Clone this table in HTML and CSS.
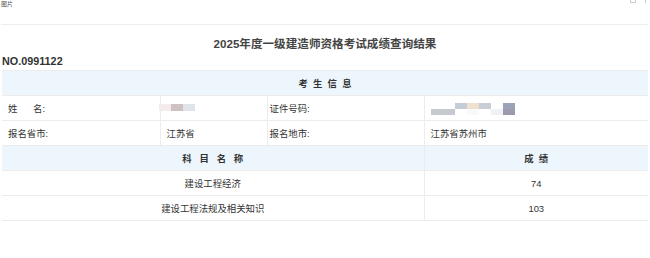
FILE: index.html
```html
<!DOCTYPE html>
<html lang="zh-CN">
<head>
<meta charset="utf-8">
<title>成绩查询结果</title>
<link rel="stylesheet" href="styles.css">
</head>
<body>
<div class="topbar">
  <span class="tab-label">图片</span>
  <span class="win-icons"><span class="win-box"></span><span class="win-slash"></span></span>
</div>
<h1 class="title">2025年度一级建造师资格考试成绩查询结果</h1>
<div class="serial">NO.0991122</div>
<table class="result">
  <colgroup>
    <col class="c1"><col class="c2"><col class="c3"><col class="c4">
  </colgroup>
  <tr class="head">
    <td colspan="4">考&nbsp;&nbsp;生&nbsp;&nbsp;信&nbsp;&nbsp;息</td>
  </tr>
  <tr>
    <td class="label">姓&nbsp;&nbsp;&nbsp;&nbsp;&nbsp;&nbsp;名:</td>
    <td class="value"><span class="mosaic name-mosaic"><i class="m1"></i><i class="m2"></i><i class="m3"></i></span></td>
    <td class="label">证件号码:</td>
    <td class="value"><span class="mosaic id-mosaic">
      <span class="mrow"><i class="w0"></i><i class="g1"></i><i class="g2"></i><i class="g3"></i><i class="w0"></i><i class="g4"></i></span>
      <span class="mrow"><i class="g5"></i><i class="w1"></i><i class="w2"></i><i class="w3"></i><i class="w4"></i><i class="g6"></i></span>
    </span></td>
  </tr>
  <tr>
    <td class="label">报名省市:</td>
    <td class="value">江苏省</td>
    <td class="label">报名地市:</td>
    <td class="value">江苏省苏州市</td>
  </tr>
  <tr class="head">
    <td colspan="3">科&nbsp;&nbsp;&nbsp;目&nbsp;&nbsp;&nbsp;名&nbsp;&nbsp;&nbsp;称</td>
    <td>成&nbsp;&nbsp;绩</td>
  </tr>
  <tr class="score">
    <td colspan="3">建设工程经济</td>
    <td>74</td>
  </tr>
  <tr class="score">
    <td colspan="3">建设工程法规及相关知识</td>
    <td>103</td>
  </tr>
</table>
</body>
</html>
```

FILE: styles.css
```css
html, body {
  margin: 0;
  padding: 0;
  background: #fff;
}
body {
  font-family: "Liberation Sans", "Noto Sans CJK SC", sans-serif;
  color: #333;
  width: 650px;
  height: 258px;
  overflow: hidden;
}
.topbar {
  position: relative;
  height: 24px;
  margin: 0 2px 0 1px;
  border-bottom: 1px solid #eeeeee;
}
.tab-label {
  display: block;
  font-size: 6px;
  line-height: 8px;
  color: #555;
  padding-left: 0;
}
.win-icons {
  position: absolute;
  right: 2px;
  top: 0;
  display: flex;
  gap: 9px;
}
.win-box {
  width: 4px;
  height: 2px;
  border: 1px solid #ccc;
  border-top: none;
}
.win-slash {
  width: 1px;
  height: 3px;
  background: #ccc;
}
.title {
  margin: 0;
  padding-top: 11px;
  height: 16px;
  line-height: 16px;
  font-size: 11.6px;
  font-weight: bold;
  text-align: center;
  color: #444;
}
.serial {
  margin-top: 2px;
  height: 15px;
  line-height: 15px;
  padding-left: 2px;
  font-size: 10.8px;
  font-weight: bold;
  color: #333;
}
.result {
  margin-top: 1px;
  margin-left: 2px;
  width: 646px;
  border-collapse: collapse;
  table-layout: fixed;
  font-size: 9.4px;
  color: #333;
}
.c1 { width: 158px; }
.c2 { width: 107px; }
.c3 { width: 157px; }
.c4 { width: 224px; }
.result td {
  height: 24px;
  padding: 0 6px;
  border-top: 1px solid #ececec;
  border-bottom: 1px solid #ececec;
  border-left: 1px solid #ececec;
  vertical-align: middle;
  white-space: nowrap;
}
.result td:first-child {
  border-left: none;
}
.result tr.head td {
  background: #eef6fd;
  font-weight: bold;
  text-align: center;
}
.result tr.score td {
  text-align: center;
}
.result td.label {
  padding-left: 6px;
}
.result tr td.label:nth-child(3) {
  padding-left: 2px;
}
.mosaic {
  display: inline-flex;
  vertical-align: middle;
}
.mosaic i {
  display: block;
}
.name-mosaic {
  margin-left: -8px;
  margin-top: -4px;
}
.name-mosaic i {
  width: 12px;
  height: 7px;
}
.name-mosaic .m1 { background: #f3ecea; }
.name-mosaic .m2 { background: #cfc2c4; }
.name-mosaic .m3 { background: #dfe3ea; }
.id-mosaic {
  flex-direction: column;
  margin-top: 1px;
}
.id-mosaic .mrow {
  display: flex;
}
.id-mosaic i {
  width: 12px;
  height: 6px;
}
.id-mosaic .mrow:first-child i:first-child { width: 24px; }
.id-mosaic .w0 { background: #fff; }
.id-mosaic .g1 { background: #c6cbd8; }
.id-mosaic .g2 { background: #efe3cf; }
.id-mosaic .g3 { background: #c9cdd6; }
.id-mosaic .g4 { background: #9aa3b8; }
.id-mosaic .g5 { background: #c7c9d0; width: 24px !important; }
.id-mosaic .w1 { background: #fff; }
.id-mosaic .w2 { background: #f7f9fb; }
.id-mosaic .w3 { background: #fff; }
.id-mosaic .w4 { background: #eef2f2; }
.id-mosaic .g6 { background: #9c9aac; }
```
